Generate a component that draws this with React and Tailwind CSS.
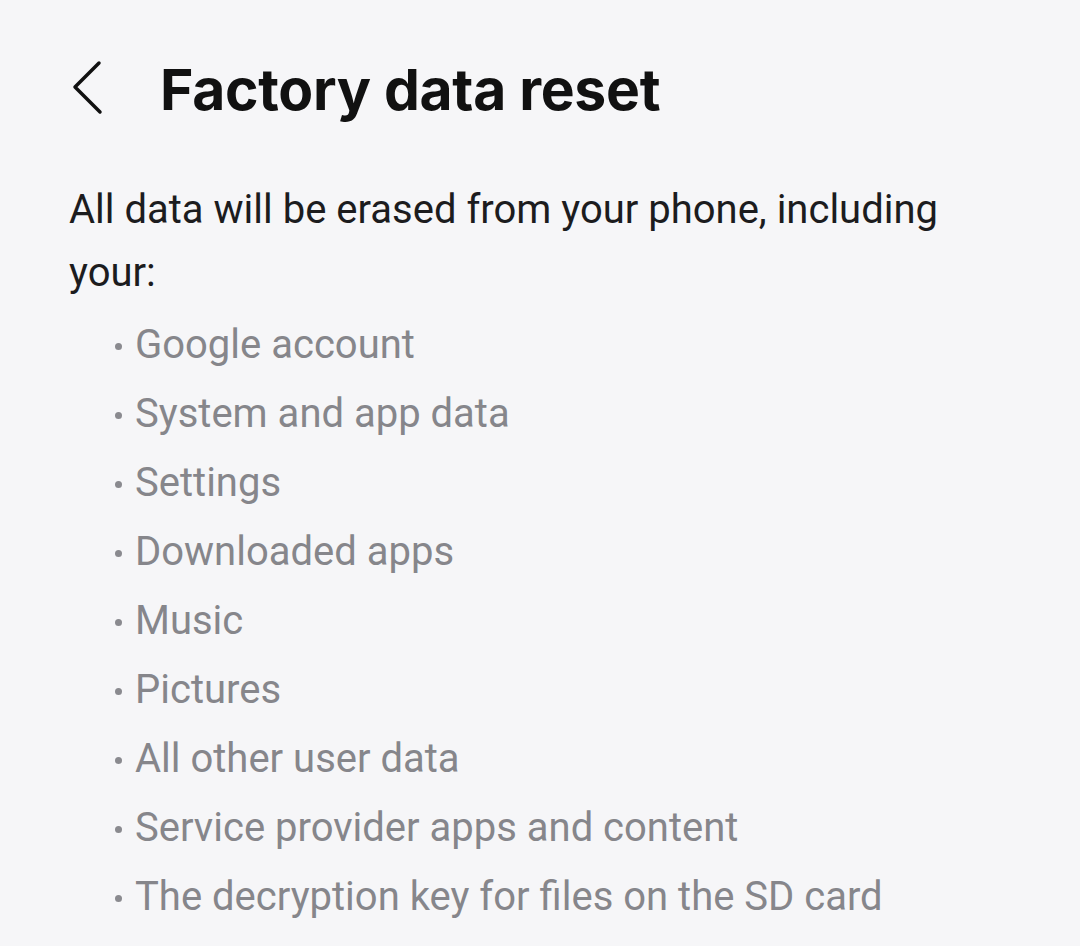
import React from 'react';

const items = [
  'Google account',
  'System and app data',
  'Settings',
  'Downloaded apps',
  'Music',
  'Pictures',
  'All other user data',
  'Service provider apps and content',
  'The decryption key for files on the SD card',
];

function BackIcon() {
  return (
    <svg width="40" height="60" viewBox="0 0 40 60" fill="none">
      <path
        d="M31 4 L7 28 L32 53"
        stroke="#111"
        strokeWidth="3.5"
        strokeLinecap="round"
        strokeLinejoin="round"
      />
    </svg>
  );
}

export default function App() {
  return (
    <div
      className="min-h-screen bg-[#f6f6f8] overflow-hidden"
      style={{ fontFamily: 'Roboto, "Noto Sans", sans-serif' }}
    >
      <header className="flex items-center h-[180px] pl-[68px]">
        <button className="flex items-center -mt-[2px]">
          <BackIcon />
        </button>
        <h1 className="ml-[52px] text-[57px] font-bold text-[#111] tracking-[-0.3px] font-['Inter',sans-serif]">
          Factory data reset
        </h1>
      </header>

      <div className="px-[69px] -mt-[2px]">
        <p className="max-w-[900px] text-[40px] leading-[63px] text-[#1c1c1e]">
          All data will be erased from your phone, including your:
        </p>
        <ul className="mt-[6px] pl-[46px] text-[#86868b]">
          {items.map((item) => (
            <li key={item} className="flex items-center h-[69px] text-[40px]">
              <span className="shrink-0 w-[7px] h-[7px] mt-[4px] mr-[13px] rounded-full bg-[#8a8a8f]" />
              <span>{item}</span>
            </li>
          ))}
        </ul>
      </div>
    </div>
  );
}
